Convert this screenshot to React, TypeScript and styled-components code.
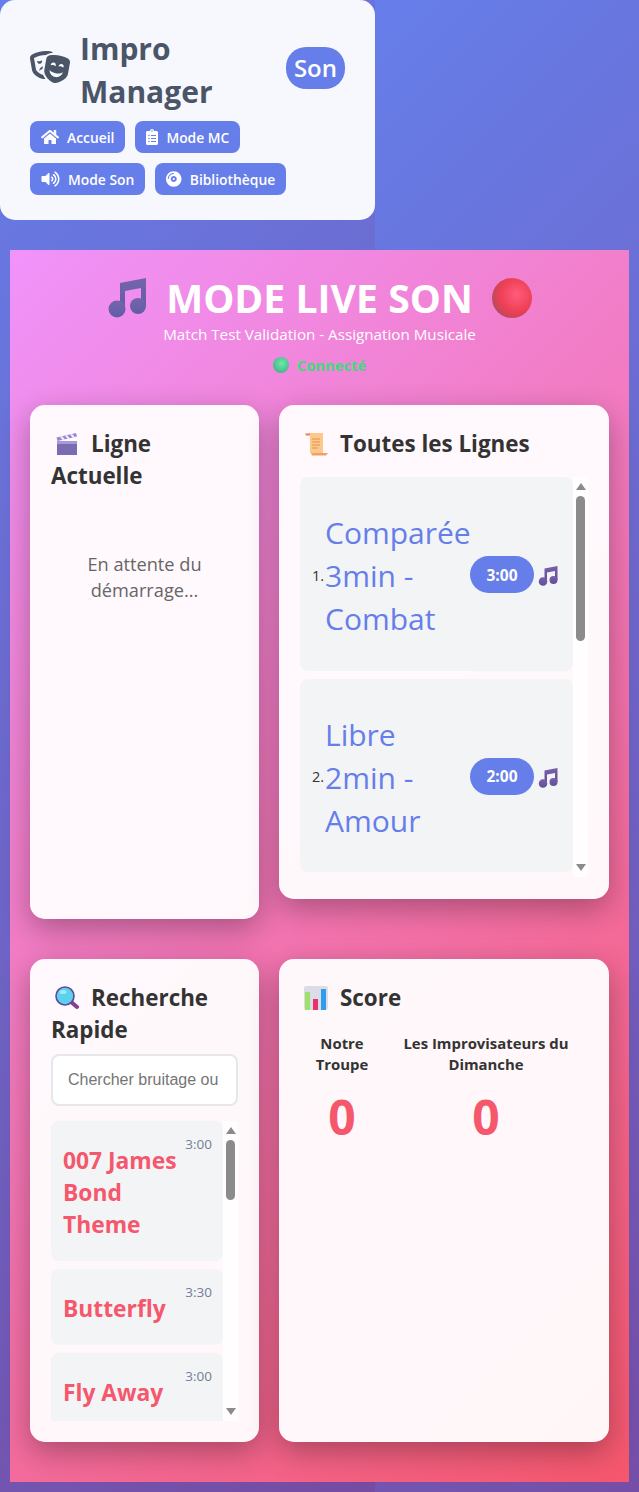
import React, { useId } from 'react'
import styled, { createGlobalStyle } from 'styled-components'
import { FaTheaterMasks, FaHome, FaClipboardList, FaVolumeUp, FaCompactDisc } from 'react-icons/fa'

const Global = createGlobalStyle`
  html {
    background: linear-gradient(135deg, #667eea 0%, #764ba2 100%);
    background-size: 375px 100%;
    background-repeat: repeat;
  }
  body {
    margin: 0;
    width: 639px;
    height: 1492px;
    overflow: hidden;
    font-family: "Open Sans", "Noto Sans", "Liberation Sans", sans-serif;
    color: #333;
  }
  * { box-sizing: border-box; }
`

const Nav = styled.nav`
  width: 375px;
  height: 220px;
  padding: 27px 30px;
  background: rgba(255, 255, 255, 0.95);
  border-radius: 15px;
`
const BrandRow = styled.div`
  display: flex;
  align-items: center;
  justify-content: space-between;
  margin-bottom: 8px;
`
const Brand = styled.div`
  display: flex;
  align-items: center;
  gap: 10px;
  color: #4a5568;
  font-size: 30px;
  font-weight: 700;
  line-height: 43px;
  width: 190px;
  svg {
    flex: none;
    width: 40px;
    height: 32px;
    margin-bottom: 6px;
  }
`
const RoleBadge = styled.span`
  background: #667eea;
  color: #fff;
  font-size: 24px;
  font-weight: 600;
  line-height: 42px;
  padding: 0 8px;
  margin-bottom: 5px;
  border-radius: 20px;
`
const NavLinks = styled.div`
  display: flex;
  flex-wrap: wrap;
  gap: 10px;
`
const NavLink = styled.a<{ $iconWidth: number }>`
  display: flex;
  align-items: center;
  gap: 8px;
  height: 32px;
  padding: 0 11px;
  background: #667eea;
  color: #fff;
  border-radius: 8px;
  font-size: 13.85px;
  font-weight: 600;
  svg {
    flex: none;
    width: ${(p) => p.$iconWidth}px;
    height: 16px;
  }
`

const Main = styled.main`
  width: 619px;
  height: 1232px;
  margin: 30px 0 0 10px;
  padding: 20px;
  background: linear-gradient(135deg, #f093fb 0%, #f5576c 100%);
`
const Hero = styled.header`
  text-align: center;
  color: #fff;
  height: 135px;
`
const HeroTitle = styled.h1`
  display: flex;
  align-items: center;
  justify-content: center;
  gap: 19.5px;
  margin: 4px 0 0;
  font-size: 39.2px;
  font-weight: 700;
  line-height: 48px;
`
const HeroSub = styled.p`
  margin: 2px 0 0;
  font-size: 15.2px;
  line-height: 20px;
`
const Status = styled.div`
  display: flex;
  align-items: center;
  justify-content: center;
  gap: 8px;
  margin-top: 11px;
  color: #3ddc7a;
  font-size: 14.8px;
  font-weight: 700;
  line-height: 20px;
`
const Dot = styled.span`
  width: 16px;
  height: 16px;
  border-radius: 50%;
  background: radial-gradient(circle at 55% 40%, #6fe8a8, #46b98c 70%, #3c8f86);
`

const Grid = styled.div`
  display: grid;
  grid-template-columns: 229px 330px;
  column-gap: 20px;
  row-gap: 40px;
  align-items: start;
  margin-top: -4px;
`
const Card = styled.section<{ $height: number }>`
  height: ${(p) => p.$height}px;
  padding: 23px 21px 21px;
  background: rgba(255, 255, 255, 0.95);
  border-radius: 15px;
  box-shadow: 0 10px 30px rgba(0, 0, 0, 0.3);
`
const CardTitle = styled.h2`
  margin: 0 0 17px;
  font-size: 22.4px;
  font-weight: 700;
  line-height: 32px;
  color: #333;
  svg {
    vertical-align: -4px;
    margin: 0 12px 0 4px;
  }
`
const Waiting = styled.p`
  margin: 59px 0 0;
  color: #666;
  font-size: 18.2px;
  line-height: 26px;
  text-align: center;
`

const ScrollFrame = styled.div<{ $height: number }>`
  display: flex;
  height: ${(p) => p.$height}px;
`
const ScrollBody = styled.div`
  flex: 1;
  min-width: 0;
  overflow: hidden;
  display: flex;
  flex-direction: column;
  gap: 8px;
`
const Track = styled.div`
  flex: 0 0 15px;
  display: flex;
  flex-direction: column;
  align-items: center;
  background: rgba(255, 255, 255, 0.7);
`
const ArrowUp = styled.i`
  margin: 6px 0 6px;
  border: 5px solid transparent;
  border-top: 0;
  border-bottom: 7px solid #8b8b8b;
`
const ArrowDown = styled.i`
  margin: auto 0 6px;
  border: 5px solid transparent;
  border-bottom: 0;
  border-top: 7px solid #8b8b8b;
`
const Thumb = styled.div<{ $height: number }>`
  width: 9px;
  height: ${(p) => p.$height}px;
  border-radius: 5px;
  background: #8b8b8b;
`

const LineItem = styled.div`
  flex: none;
  display: flex;
  align-items: center;
  height: 193.5px;
  padding: 2px 15px 0 12px;
  background: #f3f4f6;
  border-radius: 8px;
`
const LineNumber = styled.span`
  flex: none;
  width: 13px;
  margin-top: 1px;
  font-size: 14.5px;
  color: #333;
`
const LineName = styled.span`
  flex: 1;
  min-width: 0;
  margin-top: 2px;
  color: #667eea;
  font-size: 30px;
  line-height: 43px;
`
const Duration = styled.span`
  flex: none;
  width: 64px;
  height: 37px;
  display: flex;
  align-items: center;
  justify-content: center;
  background: #667eea;
  color: #fff;
  font-size: 15.5px;
  font-weight: 700;
  border-radius: 19px;
`
const NoteSlot = styled.span`
  flex: none;
  display: flex;
  margin: 3px 0 0 4px;
`

const SearchInput = styled.input`
  display: block;
  width: 100%;
  height: 52px;
  padding: 0 15px;
  margin: -9px 0 15px;
  border: 2px solid #e5e7eb;
  border-radius: 8px;
  background: #fff;
  font-family: "Liberation Sans", Arial, sans-serif;
  font-size: 16px;
  outline: none;
  &::placeholder { color: #757575; }
`
const SoundItem = styled.div`
  flex: none;
  display: flex;
  justify-content: space-between;
  align-items: flex-start;
  padding: 12px 11px 20px 12px;
  background: #f3f4f6;
  border-radius: 8px;
`
const SoundName = styled.span`
  width: 122px;
  margin-top: 12px;
  color: #f5576c;
  font-size: 22.8px;
  font-weight: 700;
  line-height: 32px;
`
const SoundTime = styled.span`
  color: #718096;
  font-size: 13.5px;
  line-height: 20px;
  margin-top: 1px;
`

const ScoreRow = styled.div`
  display: flex;
  justify-content: space-between;
  padding: 0 17px 0 15px;
  margin-top: 19px;
`
const ScoreCol = styled.div<{ $width: number }>`
  width: ${(p) => p.$width}px;
  text-align: center;
`
const TeamName = styled.div`
  font-size: 14.9px;
  font-weight: 700;
  line-height: 21px;
  color: #333;
`
const ScoreValue = styled.div`
  margin-top: 9px;
  color: #f5576c;
  font-size: 48px;
  font-weight: 700;
  line-height: 65px;
`

const MusicNotes = ({ size, top, bottom }: { size: number; top: string; bottom: string }) => {
  const id = useId()
  return (
    <svg width={size} height={size} viewBox="0 0 40 40" style={{ flex: 'none' }}>
      <defs>
        <linearGradient id={id} x1="0" y1="0" x2="0" y2="1">
          <stop offset="0" stopColor={top} />
          <stop offset="1" stopColor={bottom} />
        </linearGradient>
      </defs>
      <path
        fill={`url(#${id})`}
        d="M13 5 L39 0 V28 H34 V10 L18 13 V31 H13 Z"
      />
      <circle cx="10" cy="31" r="8.5" fill={`url(#${id})`} />
      <circle cx="31" cy="28" r="8" fill={`url(#${id})`} />
    </svg>
  )
}

const RedBall = () => (
  <svg width="40" height="40" viewBox="0 0 40 40" style={{ flex: 'none' }}>
    <defs>
      <radialGradient id="ball" cx="0.62" cy="0.42" r="0.65">
        <stop offset="0" stopColor="#ff5c7c" />
        <stop offset="0.65" stopColor="#ee3f55" />
        <stop offset="1" stopColor="#b84a5c" />
      </radialGradient>
    </defs>
    <circle cx="20" cy="20" r="20" fill="url(#ball)" />
  </svg>
)

const Clapper = () => (
  <svg width="24" height="24" viewBox="0 0 24 24">
    <rect x="2" y="9" width="20" height="14" fill="#7a6cb0" />
    <rect x="2" y="9" width="20" height="3" fill="#a89ad6" />
    <path d="M1.5 5.5 L21 1 L22 4.5 L2.5 9 Z" fill="#9a86d4" />
    <path d="M6 4.5 L9 8 M11 3.4 L14 6.8 M16 2.2 L19 5.6" stroke="#f3eefc" strokeWidth="2" />
  </svg>
)

const Scroll = () => (
  <svg width="24" height="24" viewBox="0 0 24 24">
    <path d="M4 1 H19 V21 H6 V3 Z" fill="#fcc98a" />
    <path d="M1 1.5 H6 V3.5 H2 Z" fill="#e2885c" />
    <path d="M7 21 H24 L22 23.5 H8 Z" fill="#f0a066" />
    <path d="M8 7 H16 M8 10 H16 M8 13 H16 M8 16 H14" stroke="#e8905a" strokeWidth="1.1" />
  </svg>
)

const Magnifier = () => (
  <svg width="24" height="24" viewBox="0 0 24 24">
    <path d="M15 15 L22 21" stroke="#85408f" strokeWidth="4" strokeLinecap="round" />
    <circle cx="10" cy="10" r="9" fill="#5dd0ec" stroke="#5a4a9e" strokeWidth="1.6" />
    <ellipse cx="8" cy="6" rx="3.5" ry="2" fill="#a4e8f8" />
  </svg>
)

const BarChart = () => (
  <svg width="24" height="24" viewBox="0 0 24 24">
    <rect width="24" height="24" rx="2" fill="#dcdce8" />
    <rect x="1" y="6" width="5" height="18" fill="#9ee06a" />
    <rect x="9" y="13" width="5" height="11" fill="#e8336f" />
    <rect x="17" y="3" width="5" height="21" fill="#2f9cec" />
  </svg>
)

const lines = [
  { id: 1, name: 'Comparée 3min - Combat', time: '3:00' },
  { id: 2, name: 'Libre 2min - Amour', time: '2:00' },
]
const sounds = [
  { name: '007 James Bond Theme', time: '3:00' },
  { name: 'Butterfly', time: '3:30' },
  { name: 'Fly Away', time: '3:00' },
]
const links = [
  { label: 'Accueil', icon: <FaHome />, iconWidth: 18 },
  { label: 'Mode MC', icon: <FaClipboardList />, iconWidth: 12 },
  { label: 'Mode Son', icon: <FaVolumeUp />, iconWidth: 19 },
  { label: 'Bibliothèque', icon: <FaCompactDisc />, iconWidth: 15.5 },
]

export default function App() {
  return (
    <>
      <Global />
      <Nav>
        <BrandRow>
          <Brand>
            <FaTheaterMasks />
            <span>Impro Manager</span>
          </Brand>
          <RoleBadge>Son</RoleBadge>
        </BrandRow>
        <NavLinks>
          {links.map((l) => (
            <NavLink key={l.label} $iconWidth={l.iconWidth}>
              {l.icon}
              {l.label}
            </NavLink>
          ))}
        </NavLinks>
      </Nav>
      <Main>
        <Hero>
          <HeroTitle>
            <MusicNotes size={40} top="#7565ab" bottom="#615ca8" />
            MODE LIVE SON
            <RedBall />
          </HeroTitle>
          <HeroSub>Match Test Validation - Assignation Musicale</HeroSub>
          <Status>
            <Dot />
            Connecté
          </Status>
        </Hero>
        <Grid>
          <Card $height={514}>
            <CardTitle>
              <Clapper />
              Ligne Actuelle
            </CardTitle>
            <Waiting>En attente du démarrage...</Waiting>
          </Card>
          <Card $height={494}>
            <CardTitle>
              <Scroll />
              Toutes les Lignes
            </CardTitle>
            <ScrollFrame $height={400}>
              <ScrollBody>
                {lines.map((line) => (
                  <LineItem key={line.id}>
                    <LineNumber>{line.id}.</LineNumber>
                    <LineName>{line.name}</LineName>
                    <Duration>{line.time}</Duration>
                    <NoteSlot>
                      <MusicNotes size={20} top="#7a5fa8" bottom="#5f4f9c" />
                    </NoteSlot>
                  </LineItem>
                ))}
              </ScrollBody>
              <Track>
                <ArrowUp />
                <Thumb $height={145} />
                <ArrowDown />
              </Track>
            </ScrollFrame>
          </Card>
          <Card $height={483}>
            <CardTitle>
              <Magnifier />
              Recherche Rapide
            </CardTitle>
            <SearchInput placeholder="Chercher bruitage ou musique..." />
            <ScrollFrame $height={300}>
              <ScrollBody>
                {sounds.map((s) => (
                  <SoundItem key={s.name}>
                    <SoundName>{s.name}</SoundName>
                    <SoundTime>{s.time}</SoundTime>
                  </SoundItem>
                ))}
              </ScrollBody>
              <Track>
                <ArrowUp />
                <Thumb $height={60} />
                <ArrowDown />
              </Track>
            </ScrollFrame>
          </Card>
          <Card $height={483}>
            <CardTitle>
              <BarChart />
              Score
            </CardTitle>
            <ScoreRow>
              <ScoreCol $width={54}>
                <TeamName>Notre Troupe</TeamName>
                <ScoreValue>0</ScoreValue>
              </ScoreCol>
              <ScoreCol $width={170}>
                <TeamName>Les Improvisateurs du Dimanche</TeamName>
                <ScoreValue>0</ScoreValue>
              </ScoreCol>
            </ScoreRow>
          </Card>
        </Grid>
      </Main>
    </>
  )
}
